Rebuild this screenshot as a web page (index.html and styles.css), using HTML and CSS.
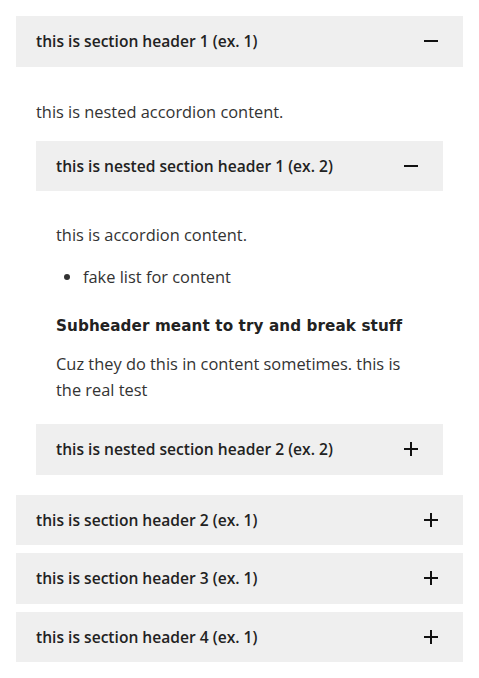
FILE: index.html
```html
<!DOCTYPE html>
<html>
<head>
<meta charset="utf-8">
<link rel="stylesheet" href="styles.css">
</head>
<body>
<div class="accordion">
  <div class="item open">
    <div class="header"><span>this is section header 1 (ex. 1)</span><svg class="icon" viewBox="0 0 14 14"><rect x="0" y="6" width="14" height="2"/></svg></div>
    <div class="content">
      <p>this is nested accordion content.</p>
      <div class="item open">
        <div class="header"><span>this is nested section header 1 (ex. 2)</span><svg class="icon" viewBox="0 0 14 14"><rect x="0" y="6" width="14" height="2"/></svg></div>
        <div class="content inner">
          <p>this is accordion content.</p>
          <ul><li>fake list for content</li></ul>
          <h4>Subheader meant to try and break stuff</h4>
          <p>Cuz they do this in content sometimes. this is the real test</p>
        </div>
      </div>
      <div class="item">
        <div class="header"><span>this is nested section header 2 (ex. 2)</span><svg class="icon" viewBox="0 0 14 14"><rect x="0" y="6" width="14" height="2"/><rect x="6" y="0" width="2" height="14"/></svg></div>
      </div>
    </div>
  </div>
  <div class="item">
    <div class="header"><span>this is section header 2 (ex. 1)</span><svg class="icon" viewBox="0 0 14 14"><rect x="0" y="6" width="14" height="2"/><rect x="6" y="0" width="2" height="14"/></svg></div>
  </div>
  <div class="item">
    <div class="header"><span>this is section header 3 (ex. 1)</span><svg class="icon" viewBox="0 0 14 14"><rect x="0" y="6" width="14" height="2"/><rect x="6" y="0" width="2" height="14"/></svg></div>
  </div>
  <div class="item">
    <div class="header"><span>this is section header 4 (ex. 1)</span><svg class="icon" viewBox="0 0 14 14"><rect x="0" y="6" width="14" height="2"/><rect x="6" y="0" width="2" height="14"/></svg></div>
  </div>
</div>
</body>
</html>
```
FILE: styles.css
```css
html, body {
  margin: 0;
  padding: 0;
  background: #fff;
}
body {
  font-family: "Open Sans", "Noto Sans", sans-serif;
  font-size: 16.4px;
  color: #333;
  padding: 16px;
}
.accordion {
  display: flex;
  flex-direction: column;
}
.accordion > .item + .item {
  margin-top: 8px;
}
.accordion > .item.open + .item {
  margin-top: 0;
}
.header {
  display: flex;
  align-items: center;
  justify-content: space-between;
  background: #efefef;
  padding: 13px 25px 13px 20px;
  line-height: 24.5px;
  font-size: 15.6px;
  font-weight: 600;
  color: #222;
}
.icon {
  width: 14px;
  height: 14px;
  fill: #111;
  flex: none;
}
.content {
  padding: 32px 20px 20px;
}
.content.inner {
  padding-top: 31px;
  padding-bottom: 21px;
}
.content p {
  margin: 0 0 16px;
  line-height: 26px;
}
.content > :last-child {
  margin-bottom: 0;
}
.content ul {
  margin: 0 0 16px;
  padding-left: 27px;
  line-height: 26px;
}
.content h4 {
  font-family: "DejaVu Sans", sans-serif;
  font-weight: 700;
  font-size: 15.2px;
  letter-spacing: 0.1px;
  line-height: 24px;
  color: #222;
  margin: 24px 0 13px;
}
```
